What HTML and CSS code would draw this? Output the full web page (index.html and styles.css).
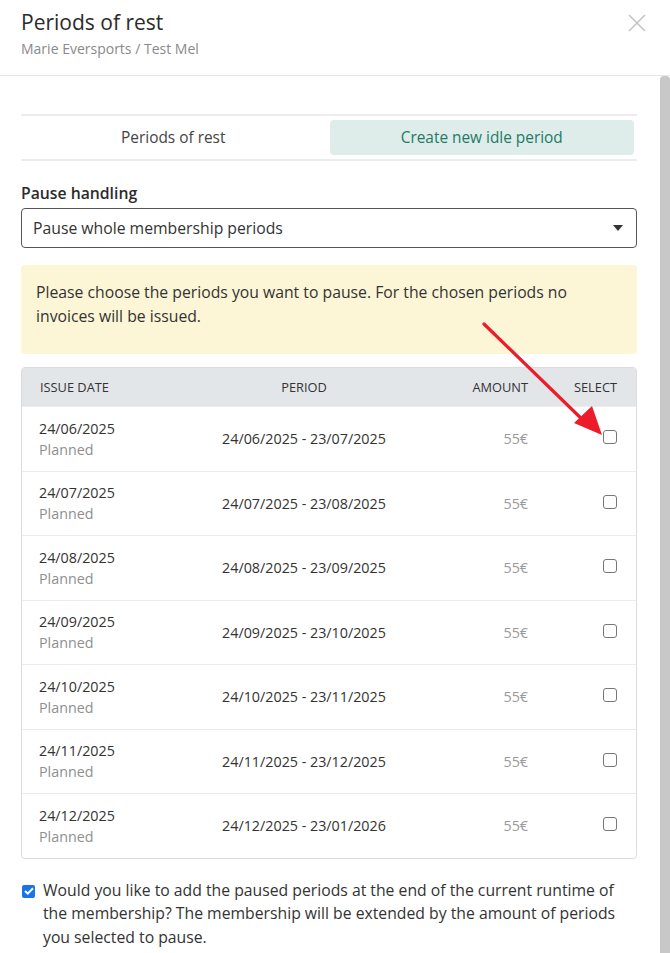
FILE: index.html
```html
<!DOCTYPE html>
<html lang="en">
<head>
<meta charset="utf-8">
<title>Periods of rest</title>
<link rel="stylesheet" href="styles.css">
</head>
<body>
<div class="modal">
  <header class="modal-header">
    <div class="titles">
      <h1 class="title">Periods of rest</h1>
      <div class="subtitle">Marie Eversports / Test Mel</div>
    </div>
    <button class="close" aria-label="Close">
      <svg width="18" height="18" viewBox="0 0 18 18"><path d="M1 1L17 17M17 1L1 17" stroke="#c4c4c4" stroke-width="1.6" fill="none"/></svg>
    </button>
  </header>

  <div class="modal-body">
    <div class="scroll-thumb"></div>
    <div class="content">
      <nav class="tabs">
        <div class="tab">Periods of rest</div>
        <div class="tab active">Create new idle period</div>
      </nav>

      <label class="field-label">Pause handling</label>
      <div class="select">
        <span>Pause whole membership periods</span>
        <svg width="10" height="6" viewBox="0 0 10 6"><path d="M0 0H10L5 6Z" fill="#333"/></svg>
      </div>

      <div class="alert">Please choose the periods you want to pause. For the chosen periods no invoices will be issued.</div>

      <div class="table">
        <div class="row head">
          <div class="c-date">Issue date</div>
          <div class="c-period">Period</div>
          <div class="c-amount">Amount</div>
          <div class="c-select">Select</div>
        </div>
        <div class="row">
          <div class="c-date"><div>24/06/2025</div><div class="status">Planned</div></div>
          <div class="c-period">24/06/2025 - 23/07/2025</div>
          <div class="c-amount">55€</div>
          <div class="c-select"><span class="box"></span></div>
        </div>
        <div class="row">
          <div class="c-date"><div>24/07/2025</div><div class="status">Planned</div></div>
          <div class="c-period">24/07/2025 - 23/08/2025</div>
          <div class="c-amount">55€</div>
          <div class="c-select"><span class="box"></span></div>
        </div>
        <div class="row">
          <div class="c-date"><div>24/08/2025</div><div class="status">Planned</div></div>
          <div class="c-period">24/08/2025 - 23/09/2025</div>
          <div class="c-amount">55€</div>
          <div class="c-select"><span class="box"></span></div>
        </div>
        <div class="row">
          <div class="c-date"><div>24/09/2025</div><div class="status">Planned</div></div>
          <div class="c-period">24/09/2025 - 23/10/2025</div>
          <div class="c-amount">55€</div>
          <div class="c-select"><span class="box"></span></div>
        </div>
        <div class="row">
          <div class="c-date"><div>24/10/2025</div><div class="status">Planned</div></div>
          <div class="c-period">24/10/2025 - 23/11/2025</div>
          <div class="c-amount">55€</div>
          <div class="c-select"><span class="box"></span></div>
        </div>
        <div class="row">
          <div class="c-date"><div>24/11/2025</div><div class="status">Planned</div></div>
          <div class="c-period">24/11/2025 - 23/12/2025</div>
          <div class="c-amount">55€</div>
          <div class="c-select"><span class="box"></span></div>
        </div>
        <div class="row">
          <div class="c-date"><div>24/12/2025</div><div class="status">Planned</div></div>
          <div class="c-period">24/12/2025 - 23/01/2026</div>
          <div class="c-amount">55€</div>
          <div class="c-select"><span class="box"></span></div>
        </div>
      </div>

      <div class="extend">
        <span class="check">
          <svg width="10" height="8" viewBox="0 0 10 8"><path d="M1 4L3.8 6.6L9 1.2" stroke="#fff" stroke-width="2" fill="none"/></svg>
        </span>
        <p>Would you like to add the paused periods at the end of the current runtime of the membership? The membership will be extended by the amount of periods you selected to pause.</p>
      </div>
    </div>

    <!-- callout arrow pointing at the first row's checkbox -->
    <svg class="callout" width="160" height="140" viewBox="0 0 160 140">
      <path d="M14 14L118 115" stroke="#ec1c2a" stroke-width="3.2" stroke-linecap="round"/>
      <path d="M132 125L104 113L122 96Z" fill="#ec1c2a"/>
    </svg>
  </div>
</div>
</body>
</html>
```

FILE: styles.css
```css
* { box-sizing: border-box; }

html, body {
  margin: 0;
  padding: 0;
  background: #fff;
}

body {
  font-family: "Open Sans", "Noto Sans", sans-serif;
  color: #333;
  width: 670px;
  height: 953px;
  overflow: hidden;
}

.modal {
  width: 670px;
}

.modal-header {
  display: flex;
  justify-content: space-between;
  align-items: flex-start;
  padding: 9px 24px 0 21px;
  height: 76px;
  border-bottom: 1px solid #e6e6e6;
}

.title {
  margin: 0;
  font-size: 21px;
  font-weight: 400;
  line-height: 27px;
  color: #2b2b2b;
}

.subtitle {
  margin-top: 4px;
  font-size: 14px;
  line-height: 18px;
  color: #8a8a8a;
}

.close {
  border: 0;
  background: none;
  padding: 0;
  margin-top: 5px;
  cursor: pointer;
}

.modal-body {
  position: relative;
  display: flex;
}

.content {
  width: 660px;
  padding: 38px 23px 0 21px;
}

.scroll-thumb {
  position: absolute;
  right: 0;
  top: 0;
  width: 10px;
  height: 900px;
  background: #c8c8c8;
  border-top-left-radius: 4px;
  border-top-right-radius: 4px;
}

.tabs {
  display: grid;
  grid-template-columns: 1fr 1fr;
  gap: 4px;
  padding: 4px 3px 4px 0;
  border-top: 2px solid #ececec;
  border-bottom: 2px solid #ececec;
}

.tab {
  height: 35px;
  display: flex;
  align-items: center;
  justify-content: center;
  font-size: 15.4px;
  color: #444;
  border-radius: 4px;
}

.tab.active {
  background: #deecea;
  color: #237a66;
}

.field-label {
  display: block;
  margin-top: 21px;
  font-size: 15.75px;
  font-weight: 600;
  line-height: 22px;
  color: #2b2b2b;
}

.select {
  margin-top: 4px;
  height: 40px;
  border: 1px solid #555;
  border-radius: 4px;
  display: flex;
  align-items: center;
  justify-content: space-between;
  padding: 0 13px 0 11px;
  font-size: 15.75px;
  color: #333;
}

.alert {
  margin-top: 17px;
  background: #fcf6d7;
  border-radius: 4px;
  padding: 15px 50px 26px 15px;
  font-size: 15.75px;
  line-height: 24px;
  color: #333;
}

.table {
  margin-top: 13px;
  border: 1px solid #dcdcdc;
  border-radius: 4px;
  overflow: hidden;
}

.row {
  display: grid;
  grid-template-columns: 150px 264px 92px 1fr;
  align-items: center;
  height: 64.5px;
  border-top: 1px solid #ececec;
  font-size: 14.3px;
  color: #333;
}

.row.head {
  height: 38px;
  border-top: 0;
  background: #e3e6e9;
  font-size: 12.8px;
  text-transform: uppercase;
  color: #333;
}

.c-date { padding-left: 17px; line-height: 21px; }
.c-period { text-align: center; }
.c-amount { text-align: right; color: #999; }
.c-select { text-align: right; padding-right: 18px; }
.row:not(.head) .c-select {
  display: flex;
  justify-content: flex-end;
  padding-bottom: 3px;
}
.head .c-amount { color: #333; }
.head .c-select { padding-right: 19px; }
.head .c-date { padding-left: 18px; }

.status { color: #8f8f8f; }

.box {
  display: block;
  width: 14px;
  height: 14px;
  border: 1.5px solid #777;
  border-radius: 3px;
  margin-right: 1px;
}

.extend {
  display: flex;
  align-items: flex-start;
  gap: 8px;
  margin-top: 20px;
  padding-left: 1px;
}

.check {
  flex: none;
  width: 13px;
  height: 13px;
  margin-top: 6px;
  border-radius: 2px;
  background: #1a73e8;
  display: flex;
  align-items: center;
  justify-content: center;
}

.extend p {
  margin: 0;
  font-size: 15.75px;
  line-height: 23.5px;
  color: #333;
}

.callout {
  position: absolute;
  left: 470px;
  top: 234px;
}
```
